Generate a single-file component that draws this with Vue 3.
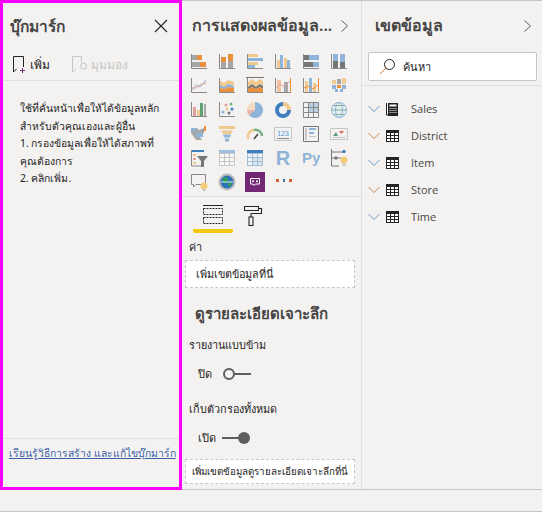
<template>
  <div class="page">
    <div class="panes">
      <aside class="bookmarks">
        <div class="paneHead bmHead">
          <h2>บุ๊กมาร์ก</h2>
          <svg class="closeIcon" width="14" height="14" viewBox="0 0 14 14">
            <path d="M1 1L13 13M13 1L1 13" stroke="#252423" stroke-width="1.1" fill="none" />
          </svg>
        </div>
        <div class="bmActions">
          <div class="bmAction add">
            <svg width="13" height="17" viewBox="0 0 13 17">
              <path d="M0.5 16V0.5H10.5V11" stroke="#252423" fill="none" />
              <path d="M0.5 16L3.5 13" stroke="#252423" fill="none" />
              <path d="M9.5 12V17M7 14.5H12" stroke="#742774" fill="none" />
            </svg>
            <span>เพิ่ม</span>
          </div>
          <div class="bmAction muted">
            <svg width="16" height="17" viewBox="0 0 16 17">
              <path d="M0.5 16V0.5H9.5V6M0.5 16L4 13" stroke="#c8c6c4" fill="none" />
              <circle cx="11.5" cy="10" r="3" stroke="#c8c6c4" fill="none" />
            </svg>
            <span>มุมมอง</span>
          </div>
        </div>
        <div class="bmBody">
          ใช้ที่คั่นหน้าเพื่อให้ได้ข้อมูลหลัก<br />
          สำหรับตัวคุณเองและผู้อื่น<br />
          1. กรองข้อมูลเพื่อให้ได้สภาพที่<br />
          คุณต้องการ<br />
          2. คลิกเพิ่ม.
        </div>
        <div class="bmFoot">
          <a>เรียนรู้วิธีการสร้าง และแก้ไขบุ๊กมาร์ก</a>
        </div>
      </aside>

      <section class="viz">
        <div class="paneHead">
          <h2>การแสดงผลข้อมูล...</h2>
          <svg class="chev" width="9" height="14" viewBox="0 0 9 14">
            <path d="M1.5 1.5L7.5 7L1.5 12.5" stroke="#605e5c" fill="none" />
          </svg>
        </div>
        <div class="vizGrid">
          <template v-for="(icon, i) in vizIcons" :key="i">
            <span v-if="icon.label" class="scriptIcon" :class="icon.cls">{{ icon.label }}</span>
            <svg v-else width="18" height="18" viewBox="0 0 18 18" v-html="icon"></svg>
          </template>
          <div class="powerApps">
            <svg width="12" height="10" viewBox="0 0 12 10">
              <path d="M1.5 1.5H10.5V7H6.5L5 8.5L4 7H1.5Z" stroke="#fff" fill="none" />
              <circle cx="4" cy="4.2" r="1" fill="#fff" />
              <circle cx="8" cy="4.2" r="1" fill="#fff" />
            </svg>
          </div>
          <div class="moreDots"><i></i><i></i><i></i></div>
        </div>

        <div class="vizTabs">
          <div class="vizTab active">
            <svg width="22" height="21" viewBox="0 0 22 21">
              <path d="M1 0.5H21" stroke="#252423" fill="none" />
              <rect x="1.5" y="3.5" width="19" height="6" stroke="#252423" stroke-dasharray="2 1" fill="none" />
              <rect x="1.5" y="12.5" width="19" height="6" stroke="#252423" stroke-dasharray="2 1" fill="none" />
            </svg>
          </div>
          <div class="vizTab">
            <svg width="20" height="21" viewBox="0 0 20 21">
              <path d="M1.5 1.5H15.5V5.5H1.5ZM15.5 3.5H18.5V8.5H8V12" stroke="#252423" stroke-width="1.1" fill="none" stroke-linejoin="round" />
              <rect x="6" y="12" width="4" height="8.5" stroke="#252423" stroke-width="1.1" fill="none" />
            </svg>
          </div>
        </div>

        <div class="fieldLabel valueLabel">ค่า</div>
        <div class="dropBox">เพิ่มเขตข้อมูลที่นี่</div>

        <h3>ดูรายละเอียดเจาะลึก</h3>
        <div class="fieldLabel">รายงานแบบข้าม</div>
        <div class="toggleRow">
          <span class="toggleText">ปิด</span>
          <span class="toggle off"><i></i></span>
        </div>
        <div class="fieldLabel">เก็บตัวกรองทั้งหมด</div>
        <div class="toggleRow on">
          <span class="toggleText">เปิด</span>
          <span class="toggle"><i></i></span>
        </div>
        <div class="dropBox drillBox">เพิ่มเขตข้อมูลดูรายละเอียดเจาะลึกที่นี่</div>
      </section>

      <section class="fields">
        <div class="paneHead">
          <h2>เขตข้อมูล</h2>
          <svg class="chev" width="9" height="14" viewBox="0 0 9 14">
            <path d="M1.5 1.5L7.5 7L1.5 12.5" stroke="#605e5c" fill="none" />
          </svg>
        </div>
        <div class="searchWrap">
          <div class="search">
            <svg width="17" height="17" viewBox="0 0 17 17">
              <circle cx="10.5" cy="6.5" r="5" stroke="#252423" fill="none" />
              <path d="M7 10L1 16" stroke="#c8742c" fill="none" />
            </svg>
            <span>ค้นหา</span>
          </div>
        </div>
        <ul class="fieldList">
          <li v-for="f in fieldItems" :key="f.name">
            <svg width="12" height="8" viewBox="0 0 12 8">
              <path d="M0.5 1L6 6.5L11.5 1" :stroke="f.color" fill="none" />
            </svg>
            <svg v-if="f.calc" class="tableIcon" width="13" height="14" viewBox="0 0 13 14">
              <path d="M0.5 1V13H2" stroke="#252423" fill="none" />
              <rect x="2" y="1" width="10" height="13" fill="#252423" />
              <rect x="3.5" y="2.5" width="7" height="2" fill="#fff" />
              <path d="M3.5 6.5H10.5M3.5 8.5H10.5M3.5 10.5H10.5" stroke="#fff" stroke-dasharray="1 1" fill="none" />
            </svg>
            <svg v-else class="tableIcon" width="13" height="12" viewBox="0 0 13 12">
              <rect x="0.5" y="0.5" width="12" height="11" fill="#fff" stroke="#252423" />
              <path d="M0 1H13V3H0Z" fill="#252423" />
              <path d="M0 5.5H13M0 8.5H13M4.5 3V12M8.5 3V12" stroke="#252423" fill="none" />
            </svg>
            <span>{{ f.name }}</span>
          </li>
        </ul>
      </section>
    </div>
    <div class="statusBar"></div>
  </div>
</template>

<script setup>
const grey = "#a6a6a6";
const dark = "#767676";
const orange = "#e8903c";
const tan = "#efc98f";
const blue = "#8fb4da";
const pink = "#e8a09a";
const green = "#7bb08d";
const axis = "#8a8886";

const r = (x, y, w, h, fill) => `<rect x="${x}" y="${y}" width="${w}" height="${h}" fill="${fill}"/>`;
const l = (d, stroke, w = 1) => `<path d="${d}" stroke="${stroke}" stroke-width="${w}" fill="none"/>`;
const f = (d, fill) => `<path d="${d}" fill="${fill}"/>`;
const c = (x, y, rad, fill) => `<circle cx="${x}" cy="${y}" r="${rad}" fill="${fill}"/>`;
const axes = l("M1.5 1V15.5H17", axis);
const cells = (head, a, b) =>
  [2, 7, 12].flatMap((x) => [5, 9, 13].map((y) => r(x, y, 4, 3, x > 2 && y > 5 ? a : b))).join("") + r(1, 1, 16, 3, head);

// six icons a row, the last row goes on with the power apps tile and the dots
const vizIcons = [
  axes + r(2, 2, 5, 5, grey) + r(7, 2, 5, 5, orange) + r(2, 9, 8, 5, grey) + r(10, 9, 6, 5, orange),
  axes + r(3, 9, 5, 6, grey) + r(3, 4, 5, 5, orange) + r(10, 8, 5, 7, grey) + r(10, 1, 5, 7, orange),
  axes + r(2, 1, 10, 3, tan) + r(2, 5, 15, 3, blue) + r(2, 9, 10, 3, tan) + r(2, 12, 7, 3, blue),
  axes + r(3, 7, 3, 8, tan) + r(6, 2, 3, 13, blue) + r(10, 5, 3, 10, tan) + r(13, 7, 3, 8, blue),
  axes + r(2, 2, 5, 5, dark) + r(7, 2, 10, 5, blue) + r(2, 9, 9, 5, dark) + r(11, 9, 6, 5, blue),
  axes + r(3, 8, 5, 7, dark) + r(3, 1, 5, 7, blue) + r(10, 9, 5, 6, dark) + r(10, 1, 5, 8, blue),

  axes + l("M2 13L6 8L10 10L16 3", blue) + l("M2 11L6 11L10 8L16 6", pink),
  axes + f("M2 4L6 6L10 3L16 5V9L10 7L6 10L2 8Z", tan) + f("M2 8L6 10L10 7L16 9V11L10 10L6 12L2 11Z", blue) + f("M2 11L6 12L10 10L16 11V15H2Z", orange),
  axes + l("M0 0.5H18", dark) + f("M2 5L6 2L10 5L14 2L17 4V9L14 7L10 10L6 7L2 10Z", tan) + f("M2 10L6 7L10 10L14 7L17 9V12L14 10L10 12L6 10L2 12Z", dark) + f("M2 12L6 10L10 12L14 10L17 12V15H2Z", orange),
  axes + r(3, 3, 4, 12, "#f0c4a0") + r(10, 5, 4, 10, grey) + l("M2 11L6 7L10 10L16 4", pink) + r(16, 1, 1, 14, orange),
  axes + r(3, 4, 3, 11, tan) + r(7, 1, 3, 14, blue) + r(11, 6, 3, 9, tan) + l("M2 11L7 9L11 12L16 8", orange) + r(16, 1, 1, 14, orange),
  r(2, 3, 4, 4, tan) + r(7, 2, 4, 5, grey) + r(12, 1, 4, 6, tan) + r(2, 8, 4, 4, blue) + r(7, 8, 4, 3, orange) + r(12, 8, 4, 4, blue) + r(5, 12, 3, 3, blue) + r(10, 12, 3, 3, blue),

  axes + r(3, 6, 3, 9, pink) + r(7, 9, 3, 6, tan) + r(10, 2, 3, 13, "#5f9f76") + r(14, 3, 2, 12, grey),
  axes + c(5, 11, 1.5, blue) + c(8, 4, 1.5, pink) + c(13, 3, 1.5, green) + c(14, 8, 1.5, "#3f7fc0") + c(11, 12, 1.5, dark) + c(9, 8, 1.5, tan),
  f("M9 1A8 8 0 1 1 3 14.3L9 9Z", blue) + f("M3 14.3A8 8 0 0 1 1 9H9Z", "#e8b0a8") + f("M1 9A8 8 0 0 1 9 1V9Z", "#f3dcc0"),
  l("M9 3A6 6 0 0 1 15 9", tan, 4) + l("M15 9A6 6 0 1 1 9 3", "#3f7fc0", 4),
  r(7, 2, 9, 9, "#b9cfe6") + l("M1.5 1.5H16.5V16.5H1.5ZM1.5 6.5H16.5M1.5 11.5H16.5M6.5 1.5V16.5M11.5 1.5V16.5", axis),
  c(9, 9, 7.5, "#e8f0f5") + l("M1.5 9H16.5M3 4.5H15M3 13.5H15", green) + `<circle cx="9" cy="9" r="7.5" fill="none" stroke="${blue}"/><ellipse cx="9" cy="9" rx="3.5" ry="7.5" fill="none" stroke="${blue}"/>`,

  f("M1 3H7L9 5L14 3V8L10 12L12 15H6L4 12L1 8Z", grey) + f("M6 8H13V12H6Z", blue) + r(14, 1, 2, 5, orange) + r(1, 3, 5, 3, blue),
  r(1, 1, 16, 3, tan) + f("M3 5.5H15L13 9H5Z", tan) + f("M5 9.5H13L12 12.5H6Z", blue) + r(7, 13.5, 4, 3, blue),
  l("M2.5 14A6.5 6.5 0 0 1 8 5", tan, 2.5) + l("M8 5A6.5 6.5 0 0 1 16 11", green, 2.5) + l("M8 14L12 9", "#444", 1.5),
  l("M0.5 2.5H17.5V15.5H0.5Z", "#c8c6c4") + r(2, 4, 14, 8, "#eef3f8") + `<text x="9" y="11" font-size="7" text-anchor="middle" fill="#5f95cb" font-family="Liberation Sans">123</text>` + r(3, 13, 12, 1, axis),
  l("M1.5 1.5H16.5V16.5H1.5Z", dark) + r(3, 3, 2, 12, "#c8c6c4") + r(7, 3, 7, 2, blue) + r(7, 7, 5, 2, blue) + r(7, 11, 7, 1, "#c8c6c4"),
  l("M0.5 3.5H17.5V14.5H0.5Z", "#c8c6c4") + f("M3 11L6 7L8 11Z", "#5a9a78") + f("M9 6H14L11.5 9Z", "#d9635c") + r(3, 12, 12, 1, "#c8c6c4"),

  r(1, 1, 13, 2, "#3f7fc0") + l("M1.5 1V17H14", axis) + r(3, 5, 3, 2, tan) + r(3, 9, 3, 2, pink) + r(3, 13, 3, 2, tan) + f("M7 7H18L14 12V18H11V12Z", dark),
  r(1, 1, 16, 16, "#c8c6c4") + cells("#9fbfe0", "#f8f8f8", "#f8f8f8"),
  r(1, 1, 16, 16, "#a6bcd2") + cells("#3f7fc0", "#d5e2f0", "#eef3f8"),
  { label: "R", cls: "big" },
  { label: "Py", cls: "py" },
  l("M1.5 0V17H9", dark) + l("M2 3H14M2 9H11", dark) + c(14, 2.5, 1.7, "#3f7fc0") + c(6, 9, 1.7, dark) + c(14, 11, 3.5, "#f2cc7a") + r(12.5, 14.5, 3, 2.5, "#c8c6c4"),

  l("M1.5 1.5H15.5V11.5H6L3.5 14V11.5H1.5Z", axis) + c(14, 13, 3.5, "#f2cc7a") + r(12.5, 16, 3, 2, "#c8c6c4"),
  c(9, 9, 8.5, "#bdbdbd") + c(9, 9, 6.5, "#2e73b8") + f("M5 5L9 4L10 8L7 11L5 9Z", "#2fa052") + f("M11 9L14 8L13 13L10 13Z", "#2fa052") + l("M3 9H15", "#d5e2f0"),
];

const fieldItems = [
  { name: "Sales", color: "#6a9bc9", calc: true },
  { name: "District", color: "#c8864a" },
  { name: "Item", color: "#6a9bc9" },
  { name: "Store", color: "#c8864a" },
  { name: "Time", color: "#6a9bc9" },
];
</script>

<style>
html,
body {
  margin: 0;
  background: #f3f2f1;
}
</style>

<style scoped>
.page {
  width: 542px;
  height: 512px;
  box-sizing: border-box;
  display: flex;
  flex-direction: column;
  background: #f3f2f1;
  color: #252423;
  font-family: "Noto Sans", "DejaVu Sans", "Liberation Sans", sans-serif;
  font-size: 11px;
  overflow: hidden;
  border-bottom: 1px solid #c8c6c4;
}
.panes {
  flex: 1;
  display: flex;
  min-height: 0;
  border-top: 1px solid #c8c6c4;
}
.statusBar {
  height: 21px;
  border-top: 1px solid #c8c6c4;
}
h2,
h3,
ul {
  margin: 0;
  padding: 0;
}
.bookmarks {
  width: 182px;
  box-sizing: border-box;
  margin-top: -1px;
  margin-bottom: -1px;
  position: relative;
  z-index: 1;
  border: 3px solid #ff00ff;
  display: flex;
  flex-direction: column;
}
.paneHead {
  height: 49px;
  display: flex;
  align-items: center;
  justify-content: space-between;
  padding: 0 16px 0 10px;
}
.paneHead h2 {
  font-size: 16px;
  font-weight: 600;
  color: #484644;
  white-space: nowrap;
}
.bmHead {
  height: 46px;
  padding: 0 11px 0 7px;
}
.bmHead h2 {
  font-size: 15.5px;
}
.bmActions {
  display: flex;
  height: 32px;
  box-sizing: border-box;
  padding: 3px 10px 0;
  border-bottom: 1px solid #e1dfdd;
  align-items: flex-start;
}
.bmAction {
  display: flex;
  align-items: center;
  font-size: 12px;
  height: 24px;
}
.bmAction.add {
  gap: 4px;
  margin-right: 22px;
}
.bmAction.muted {
  gap: 3px;
  color: #c8c6c4;
}
.bmBody {
  padding: 19px 0 0 17px;
  font-size: 10.4px;
  line-height: 17.5px;
  white-space: nowrap;
  flex: 1;
}
.bmFoot {
  height: 49px;
  border-top: 1px solid #e1dfdd;
  padding: 4px 0 0 6px;
  box-sizing: border-box;
  white-space: nowrap;
  font-size: 10.4px;
  line-height: 20px;
}
.bmFoot a {
  color: #3b5fa5;
  text-decoration: underline;
}
.viz {
  width: 180px;
  box-sizing: border-box;
  border-right: 1px solid #e1dfdd;
}
.viz .paneHead {
  padding: 0 12px 0 10px;
}
.vizGrid {
  display: grid;
  grid-template-columns: repeat(6, 18px);
  grid-auto-rows: 24px;
  column-gap: 10px;
  padding: 3px 0 0 8px;
  height: 147px;
  box-sizing: border-box;
  border-bottom: 1px solid #e1dfdd;
  align-items: start;
}
.scriptIcon {
  font-family: "Liberation Sans", sans-serif;
  font-weight: 700;
  color: #8fb4da;
  text-align: center;
  white-space: nowrap;
  line-height: 18px;
}
.scriptIcon.big {
  font-size: 20px;
}
.scriptIcon.py {
  font-size: 15px;
}
.powerApps {
  width: 20px;
  height: 20px;
  margin: -1px 0 0 -1px;
  background: #742774;
  display: flex;
  align-items: center;
  justify-content: center;
}
.moreDots {
  display: flex;
  gap: 4px;
  padding: 6px 0 0 2px;
}
.moreDots i {
  width: 3px;
  height: 3px;
  background: #c8642c;
}
.moreDots i:nth-child(2) {
  background: #3f6fa8;
}
.vizTabs {
  display: flex;
  padding: 8px 0 0 11px;
}
.vizTab {
  width: 40px;
  height: 28px;
  display: flex;
  justify-content: center;
  box-sizing: border-box;
}
.vizTab.active {
  border-bottom: 4px solid #f2c811;
  border-radius: 0 0 2px 2px;
}
.fieldLabel {
  font-size: 10.8px;
  line-height: 16px;
  padding-left: 7px;
  color: #252423;
}
.valueLabel {
  margin-top: 6px;
}
.dropBox {
  margin: 5px 6px 0 3px;
  height: 28px;
  box-sizing: border-box;
  background: #fff;
  border: 1px dashed #c8c6c4;
  padding-left: 10px;
  line-height: 26px;
  font-size: 10.8px;
  white-space: nowrap;
}
.viz h3 {
  font-size: 15px;
  line-height: 20px;
  font-weight: 600;
  color: #484644;
  margin: 15px 0 14px 13px;
}
.toggleRow {
  display: flex;
  align-items: center;
  height: 20px;
  margin: 11px 0 17px 16px;
  gap: 11px;
}
.toggleRow.on {
  gap: 4px;
  margin-bottom: 11px;
}
.toggle {
  width: 30px;
  height: 12px;
  display: block;
  position: relative;
}
.toggle::before {
  content: "";
  position: absolute;
  left: 2px;
  right: 2px;
  top: 5px;
  height: 2px;
  background: #605e5c;
}
.toggle i {
  position: absolute;
  right: 0;
  top: 0;
  width: 12px;
  height: 12px;
  border-radius: 50%;
  background: #605e5c;
  box-sizing: border-box;
}
.toggle.off i {
  right: auto;
  left: 0;
  background: #f3f2f1;
  border: 2px solid #605e5c;
}
.drillBox {
  margin-top: 0;
  height: 25px;
  line-height: 23px;
  padding-left: 6px;
  font-size: 9.8px;
  overflow: hidden;
}
.fields {
  flex: 1;
  min-width: 0;
}
.fields .paneHead {
  padding: 0 10px 0 13px;
}
.searchWrap {
  padding: 2px 5px 5px 6px;
  height: 36px;
  box-sizing: border-box;
  border-bottom: 1px solid #e1dfdd;
}
.search {
  height: 29px;
  box-sizing: border-box;
  background: #fff;
  border: 1px solid #c8c6c4;
  border-radius: 2px;
  display: flex;
  align-items: center;
  gap: 7px;
  padding-left: 10px;
}
.fieldList {
  list-style: none;
  padding: 9px 0 0 6px;
}
.fieldList li {
  display: flex;
  align-items: center;
  height: 27px;
  gap: 6px;
  color: #484644;
  font-family: "Open Sans", "Noto Sans", sans-serif;
  font-size: 11px;
}
.fieldList span {
  margin-left: 6px;
}
.tableIcon {
  flex: none;
}
</style>
